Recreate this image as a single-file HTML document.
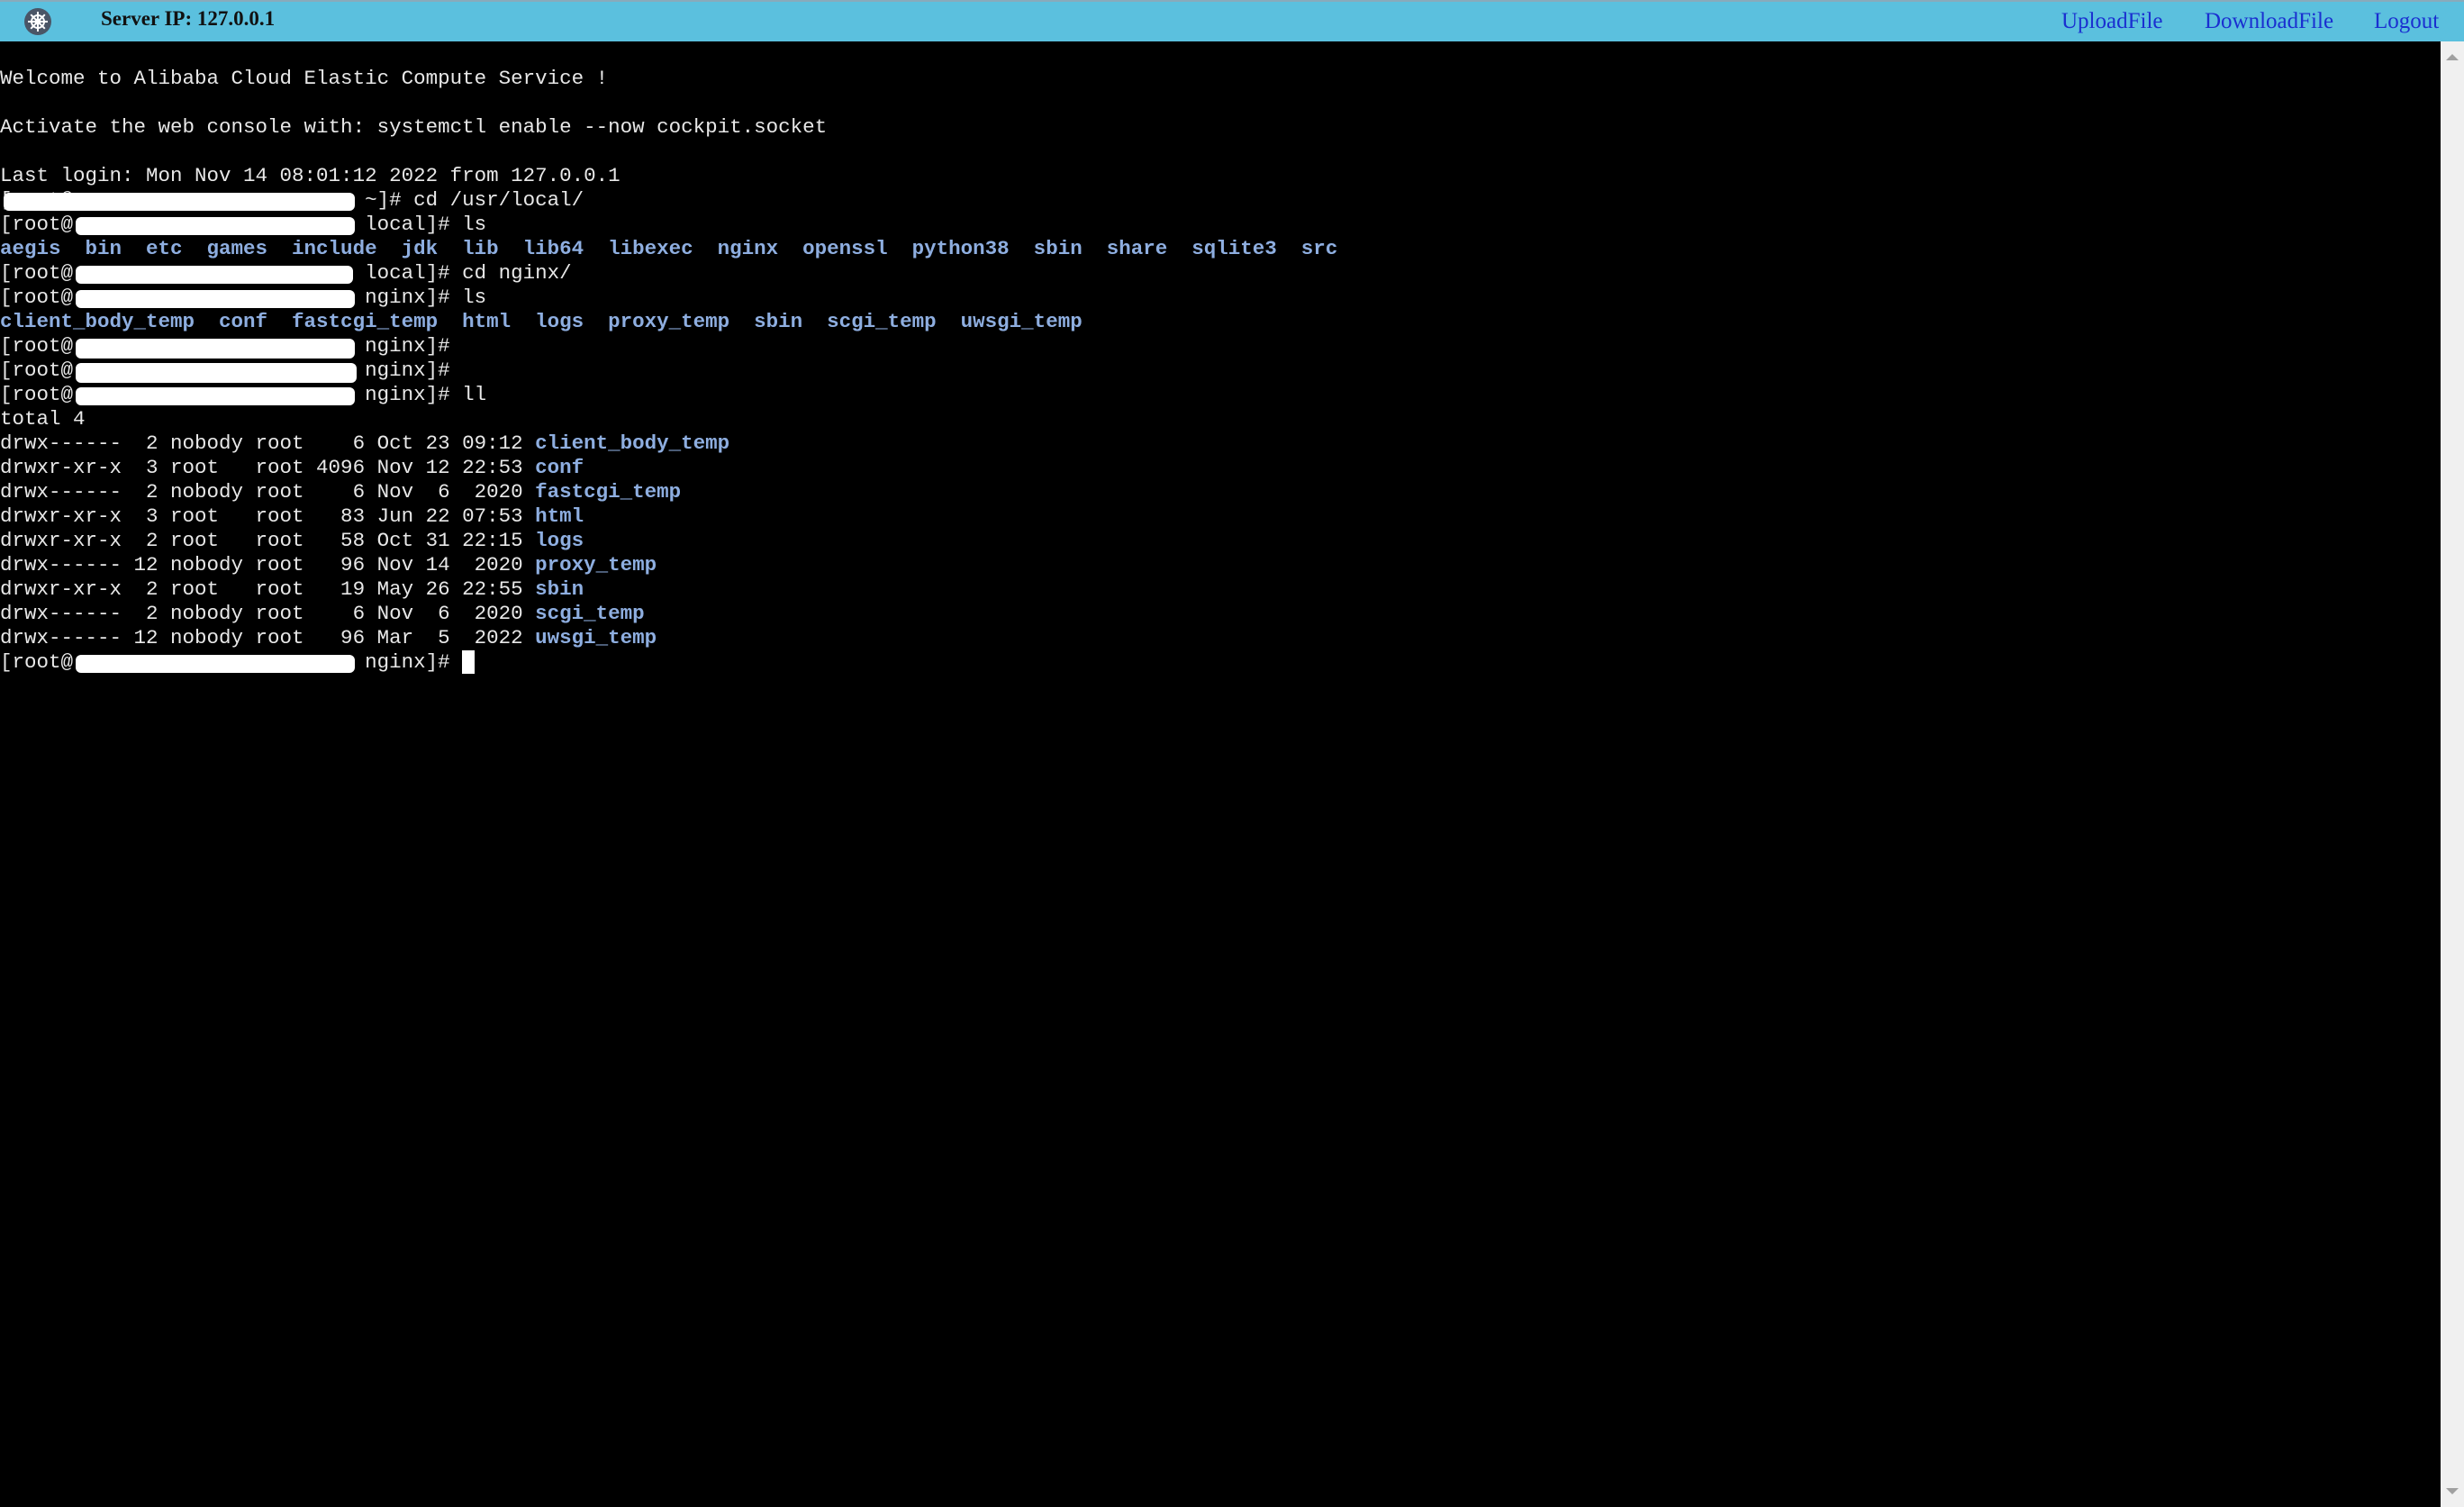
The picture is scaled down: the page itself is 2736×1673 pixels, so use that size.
<!DOCTYPE html>
<html><head><meta charset="utf-8"><style>
html,body{margin:0;padding:0;width:2736px;height:1673px;overflow:hidden;background:#000}
#bar{position:absolute;left:0;top:0;width:2736px;height:46px;background:#5bc0de;border-top:2px solid #8ab;box-sizing:border-box}
#ip{position:absolute;left:112px;top:6px;font:bold 23px "Liberation Serif",serif;color:#111}
.lnk{position:absolute;top:8px;font:25px "Liberation Serif",serif;color:#1a2fd0}
#term{position:absolute;left:0;top:46px;width:2710px;height:1627px;background:#000}
#sb{position:absolute;left:2710px;top:46px;width:26px;height:1627px;background:#f0f0f0}
.l{position:absolute;left:0;height:27px;line-height:27px;font:22.5px "Liberation Mono",monospace;color:#e8e8e8;white-space:pre}
.b{color:#8eaee0;font-weight:bold}
.w{position:absolute;background:#fff;height:20px;border-radius:6px}
</style></head><body>
<div id="bar">
<svg style="position:absolute;left:27px;top:7px" width="30" height="30" viewBox="0 0 30 30"><circle cx="15" cy="15" r="15" fill="#4a5566"/><g stroke="#fff" stroke-width="2" fill="none"><circle cx="15" cy="15" r="7"/><circle cx="15" cy="15" r="2.5"/><path d="M15 4V26M4 15H26M7.2 7.2L22.8 22.8M22.8 7.2L7.2 22.8"/></g></svg>
<div id="ip">Server IP: 127.0.0.1</div>
<div class="lnk" style="left:2289px">UploadFile</div>
<div class="lnk" style="left:2448px">DownloadFile</div>
<div class="lnk" style="left:2636px">Logout</div>
</div>
<div id="term"></div>
<div id="sb"><div style="position:absolute;left:6px;top:14px;width:0;height:0;border-left:7px solid transparent;border-right:7px solid transparent;border-bottom:7px solid #a0a0a0"></div><div style="position:absolute;left:6px;bottom:14px;width:0;height:0;border-left:7px solid transparent;border-right:7px solid transparent;border-top:7px solid #a0a0a0"></div></div>

<div class="l" style="top:74px">Welcome to Alibaba Cloud Elastic Compute Service !</div>
<div class="l" style="top:128px">Activate the web console with: systemctl enable --now cockpit.socket</div>
<div class="l" style="top:182px">Last login: Mon Nov 14 08:01:12 2022 from 127.0.0.1</div>
<div class="l" style="top:209px">[root@                        ~]# cd /usr/local/</div>
<div class="l" style="top:236px">[root@                        local]# ls</div>
<div class="l b" style="top:263px">aegis  bin  etc  games  include  jdk  lib  lib64  libexec  nginx  openssl  python38  sbin  share  sqlite3  src</div>
<div class="l" style="top:290px">[root@                        local]# cd nginx/</div>
<div class="l" style="top:317px">[root@                        nginx]# ls</div>
<div class="l b" style="top:344px">client_body_temp  conf  fastcgi_temp  html  logs  proxy_temp  sbin  scgi_temp  uwsgi_temp</div>
<div class="l" style="top:371px">[root@                        nginx]#</div>
<div class="l" style="top:398px">[root@                        nginx]#</div>
<div class="l" style="top:425px">[root@                        nginx]# ll</div>
<div class="l" style="top:452px">total 4</div>
<div class="l" style="top:479px">drwx------  2 nobody root    6 Oct 23 09:12 <span class="b">client_body_temp</span></div>
<div class="l" style="top:506px">drwxr-xr-x  3 root   root 4096 Nov 12 22:53 <span class="b">conf</span></div>
<div class="l" style="top:533px">drwx------  2 nobody root    6 Nov  6  2020 <span class="b">fastcgi_temp</span></div>
<div class="l" style="top:560px">drwxr-xr-x  3 root   root   83 Jun 22 07:53 <span class="b">html</span></div>
<div class="l" style="top:587px">drwxr-xr-x  2 root   root   58 Oct 31 22:15 <span class="b">logs</span></div>
<div class="l" style="top:614px">drwx------ 12 nobody root   96 Nov 14  2020 <span class="b">proxy_temp</span></div>
<div class="l" style="top:641px">drwxr-xr-x  2 root   root   19 May 26 22:55 <span class="b">sbin</span></div>
<div class="l" style="top:668px">drwx------  2 nobody root    6 Nov  6  2020 <span class="b">scgi_temp</span></div>
<div class="l" style="top:695px">drwx------ 12 nobody root   96 Mar  5  2022 <span class="b">uwsgi_temp</span></div>
<div class="l" style="top:722px">[root@                        nginx]# <span style="background:#fff">&nbsp;</span></div>

<div class="w" style="left:4px;top:214px;width:390px"></div>
<div class="w" style="left:84px;top:241px;width:310px"></div>
<div class="w" style="left:84px;top:295px;width:308px"></div>
<div class="w" style="left:84px;top:322px;width:310px"></div>
<div class="w" style="left:84px;top:376px;width:310px;height:22px"></div>
<div class="w" style="left:84px;top:403px;width:312px;height:22px"></div>
<div class="w" style="left:84px;top:430px;width:310px"></div>
<div class="w" style="left:84px;top:727px;width:310px"></div>
</body></html>
